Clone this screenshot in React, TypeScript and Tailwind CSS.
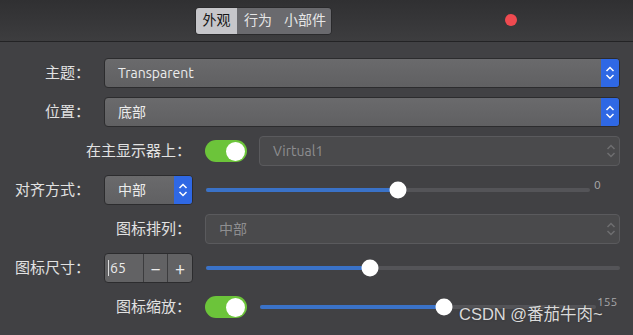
const font = "font-['Ubuntu','Noto_Sans','Noto_Sans_CJK_SC',sans-serif]";

function Chevrons({ color = "#ffffff" }: { color?: string }) {
  return (
    <svg width="10" height="18" viewBox="0 0 10 18" fill="none">
      <polyline points="1.5,7 5,3.5 8.5,7" stroke={color} strokeWidth="1.5" />
      <polyline points="1.5,11 5,14.5 8.5,11" stroke={color} strokeWidth="1.5" />
    </svg>
  );
}

function Select({ value, className = "" }: { value: string; className?: string }) {
  return (
    <div
      className={`flex h-[30px] rounded-[4px] border border-[#2c2c2e] bg-gradient-to-b from-[#6a6a6c] to-[#606062] ${className}`}>
      <div className="flex flex-1 items-center pl-[13px] text-[14px] text-[#ececec]">{value}</div>
      <div className="flex w-[18px] items-center justify-center rounded-r-[3px] bg-[#2f68e4]">
        <Chevrons />
      </div>
    </div>
  );
}

function DisabledSelect({ value }: { value: string }) {
  return (
    <div className="flex h-[30px] flex-1 items-center rounded-[4px] border border-[#5a5a5d] bg-[#4a4a4c] pl-[13px] pr-[3px] text-[14px] text-[#8e8e90]">
      <span className="flex-1">{value}</span>
      <Chevrons color="#6e6e70" />
    </div>
  );
}

function Toggle() {
  return (
    <div className="flex h-[22px] w-[42px] items-center justify-end rounded-full bg-[#6cc43a] pr-[2px]">
      <div className="h-[19px] w-[19px] rounded-full bg-white" />
    </div>
  );
}

function Slider({ pct, className = "" }: { pct: number; className?: string }) {
  return (
    <div className={`relative h-[4px] rounded-full bg-[#545458] ${className}`}>
      <div className="h-full rounded-full bg-[#3a72c8]" style={{ width: `${pct}%` }} />
      <div
        className="absolute top-1/2 h-[17px] w-[17px] -translate-x-1/2 -translate-y-1/2 rounded-full bg-white"
        style={{ left: `${pct}%` }}
      />
    </div>
  );
}

function Row({ label, wide, children }: { label: string; wide?: boolean; children: React.ReactNode }) {
  return (
    <div className="flex h-[30px] items-center gap-[14px]">
      <div className={`${wide ? "w-[191px]" : "w-[90px]"} shrink-0 text-right text-[15px] text-[#e2e2e2]`}>
        {label}
      </div>
      <div className="flex flex-1 items-center">{children}</div>
    </div>
  );
}

export default function App() {
  return (
    <div className={`relative h-[335px] w-[633px] overflow-hidden bg-[#414144] ${font}`}>
      <div className="relative flex h-[42px] items-center border-b border-[#232325] bg-gradient-to-b from-[#303032] to-[#3d3d3f] pl-[195px]">
        <div className="flex h-[28px] overflow-hidden rounded-[4px] border border-[#2a2a2c] text-[14px]">
          <div className="flex w-[41px] items-center justify-center bg-[#c6c6ca] text-[#161616]">外观</div>
          <div className="flex w-[42px] items-center justify-center bg-[#6a6a6e] text-[#e6e6e6]">行为</div>
          <div className="flex w-[52px] items-center justify-center bg-[#6a6a6e] text-[#e6e6e6]">小部件</div>
        </div>
        <div className="absolute left-[505px] top-[14px] h-[12px] w-[12px] rounded-full bg-[#ef4a50]" />
      </div>

      <div className="flex flex-col gap-[9px] pr-[13px] pt-[16px]">
        <Row label="主题：">
          <Select value="Transparent" className="flex-1" />
        </Row>
        <Row label="位置：">
          <Select value="底部" className="flex-1" />
        </Row>
        <Row label="在主显示器上：" wide>
          <Toggle />
          <div className="ml-[12px] flex flex-1">
            <DisabledSelect value="Virtual1" />
          </div>
        </Row>
        <Row label="对齐方式：">
          <Select value="中部" className="w-[89px]" />
          <Slider pct={50} className="ml-[13px] w-[384px]" />
          <span className="ml-[4px] -mt-[11px] text-[12px] text-[#a8a8aa]">0</span>
        </Row>
        <Row label="图标排列：" wide>
          <DisabledSelect value="中部" />
        </Row>
        <Row label="图标尺寸：">
          <div className="flex h-[30px] w-[89px] overflow-hidden rounded-[4px] border border-[#2c2c2e] bg-[#626264] text-[#ececec]">
            <div className="flex w-[38px] items-center pl-[3px] text-[14px]">
              <span className="mr-[1px] h-[16px] w-px bg-[#dcdcdc]" />
              65
            </div>
            <div className="flex w-[24px] items-center justify-center border-l border-[#3c3c3e] text-[18px]">−</div>
            <div className="flex flex-1 items-center justify-center border-l border-[#3c3c3e] text-[18px]">+</div>
          </div>
          <Slider pct={39.5} className="ml-[13px] flex-1" />
        </Row>
        <Row label="图标缩放：" wide>
          <Toggle />
          <Slider pct={54.7} className="ml-[13px] w-[336px]" />
          <span className="ml-[1px] -mt-[10px] text-[12px] text-[#a8a8aa]">155</span>
        </Row>
      </div>

      <div className="absolute left-[459px] top-[302px] font-['Liberation_Sans','Noto_Sans_CJK_SC',sans-serif] text-[16.5px] text-[#dadada] [text-shadow:0_0_2px_#333]">
        CSDN @番茄牛肉~
      </div>
    </div>
  );
}
